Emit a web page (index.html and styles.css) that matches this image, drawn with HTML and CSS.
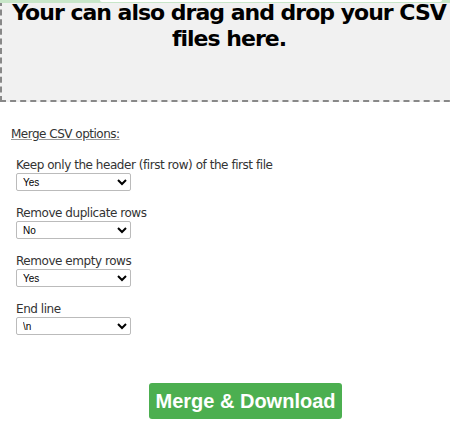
FILE: index.html
```html
<!DOCTYPE html>
<html lang="en">
<head>
    <meta charset="UTF-8">
    <meta name="viewport" content="width=device-width, initial-scale=1.0">
    <title>Merge CSV</title>
    <link rel="stylesheet" href="styles.css">
</head>
<body>
    <div class="progress-edge"><div class="progress-fill"></div></div>

    <div class="dropzone">
        <h2>Your can also drag and drop your CSV files here.</h2>
    </div>

    <div class="options">
        <p class="options-title">Merge CSV options:</p>

        <div class="option">
            <label for="header">Keep only the header (first row) of the first file</label>
            <select id="header">
                <option>Yes</option>
                <option>No</option>
            </select>
        </div>

        <div class="option">
            <label for="duplicates">Remove duplicate rows</label>
            <select id="duplicates">
                <option>No</option>
                <option>Yes</option>
            </select>
        </div>

        <div class="option">
            <label for="empty">Remove empty rows</label>
            <select id="empty">
                <option>Yes</option>
                <option>No</option>
            </select>
        </div>

        <div class="option">
            <label for="endline">End line</label>
            <select id="endline">
                <option>\n</option>
                <option>\r\n</option>
            </select>
        </div>
    </div>

    <div class="actions">
        <button type="button">Merge &amp; Download</button>
    </div>
</body>
</html>
```

FILE: styles.css
```css
/* Global */
* {
    box-sizing: border-box;
}

body {
    position: relative;
    margin: 0;
    width: 450px;
    overflow: hidden;
    background: #fff;
    font-family: 'DejaVu Sans', Verdana, sans-serif;
    color: #333;
}

/* Edge of the progress bar scrolled above the view */
.progress-edge {
    position: absolute;
    top: 0;
    left: 0;
    right: 0;
    height: 3px;
    background: #c8e6c9;
    padding: 0 8px 0 100px;
}

.progress-fill {
    height: 2px;
    background: #fff;
    border-radius: 0 0 3px 3px;
}

/* Drop zone */
.dropzone {
    width: 470px;
    height: 102px;
    background: #f1f1f1;
    border: 2px dashed #888;
    border-top: none;
}

.dropzone h2 {
    width: 454px;
    margin: 0;
    font-size: 22px;
    line-height: 26px;
    letter-spacing: -1px;
    font-weight: bold;
    color: #000;
    text-align: center;
}

/* Options */
.options {
    padding: 25px 0 0 11px;
}

.options-title {
    margin: 0 0 16px 0;
    font-size: 12px;
    line-height: 15px;
    letter-spacing: -0.5px;
    text-decoration: underline;
    text-decoration-color: #999;
    color: #333;
}

.option {
    padding-left: 5px;
    margin-bottom: 15px;
}

.option label {
    display: block;
    font-size: 12px;
    line-height: 15px;
    letter-spacing: -0.45px;
}

.option select {
    display: block;
    width: 115px;
    height: 18px;
    font-family: 'Liberation Sans', Arial, sans-serif;
    font-size: 10px;
    padding: 0 2px;
    border: 1px solid #bbb;
    border-radius: 2px;
    background: #fff;
    color: #000;
}

/* Button */
.actions {
    padding-top: 33px;
    padding-left: 149px;
}

button {
    width: 193px;
    height: 36px;
    background-color: #4caf50;
    color: #fff;
    border: none;
    border-radius: 3px;
    font-family: 'Liberation Sans', Arial, sans-serif;
    font-size: 20px;
    font-weight: bold;
    cursor: pointer;
}
```
